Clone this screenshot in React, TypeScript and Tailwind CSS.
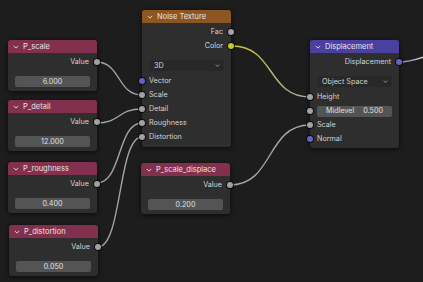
import React from "react";

type Kind = "float" | "vector" | "color";

const socketTone: Record<Kind, string> = {
  float: "bg-[#a1a1a1]",
  vector: "bg-[#6363c7]",
  color: "bg-[#c7c729]",
};

function Socket({ side, kind = "float" }: { side: "in" | "out"; kind?: Kind }) {
  return (
    <span
      className={`absolute top-1/2 -translate-y-1/2 w-[6px] h-[6px] rounded-full ring-1 ring-black/70 ${socketTone[kind]} ${
        side === "in" ? "left-[-3px]" : "right-[-3px]"
      }`}
    />
  );
}

function Chevron({ className }: { className?: string }) {
  return (
    <svg viewBox="0 0 8 5" className={className} fill="none" stroke="currentColor" strokeWidth="1.2">
      <path d="M1 1 L4 4 L7 1" />
    </svg>
  );
}

function Header({ title, tone }: { title: string; tone: string }) {
  return (
    <div className={`h-[13px] rounded-t-[3px] flex items-center pl-[5px] gap-[4px] text-[7.5px] text-[#e4e4e4] ${tone}`}>
      <Chevron className="w-[6px] h-[4px]" />
      <span className="leading-none">{title}</span>
    </div>
  );
}

function OutRow({ label, kind }: { label: string; kind?: Kind }) {
  return (
    <div className="relative h-[14px] flex items-center justify-end pr-[8px]">
      <span className="leading-none">{label}</span>
      <Socket side="out" kind={kind} />
    </div>
  );
}

function InRow({ label, kind }: { label: string; kind?: Kind }) {
  return (
    <div className="relative h-[14px] flex items-center pl-[7px]">
      <span className="leading-none">{label}</span>
      <Socket side="in" kind={kind} />
    </div>
  );
}

function Dropdown({ label }: { label: string }) {
  return (
    <div className="mx-[7px] h-[11px] rounded-[2px] bg-[#282828] flex items-center justify-between pl-[5px] pr-[4px]">
      <span className="leading-none">{label}</span>
      <Chevron className="w-[5px] h-[3px] text-[#bdbdbd]" />
    </div>
  );
}

const valueNodes = [
  { title: "P_scale", left: "left-[8px]", top: "top-[40px]", value: "6.000" },
  { title: "P_detail", left: "left-[8px]", top: "top-[100px]", value: "12.000" },
  { title: "P_roughness", left: "left-[8px]", top: "top-[162px]", value: "0.400" },
  { title: "P_distortion", left: "left-[9px]", top: "top-[225px]", value: "0.050" },
  { title: "P_scale_displace", left: "left-[141px]", top: "top-[163px]", value: "0.200" },
];

const node = "absolute w-[89px] rounded-[3px] bg-[#2e2e2e] shadow-[0_1px_5px_rgba(0,0,0,0.7)]";

// handle length follows the horizontal span, like the editor's default curving
function link(x1: number, y1: number, x2: number, y2: number) {
  const h = Math.max(Math.abs(x2 - x1) * 0.55, 12);
  return `M${x1},${y1} C${x1 + h},${y1} ${x2 - h},${y2} ${x2},${y2}`;
}

export default function App() {
  return (
    <div className="relative w-[423px] h-[282px] overflow-hidden bg-[#1d1d1d] font-['Inter',sans-serif] text-[7.2px] text-[#d4d4d4]">
      <svg className="absolute inset-0" width="423" height="282" fill="none">
        <defs>
          <linearGradient id="yl" x1="232" y1="46" x2="310" y2="97" gradientUnits="userSpaceOnUse">
            <stop offset="0" stopColor="#c9c92c" />
            <stop offset="1" stopColor="#a8a8a8" />
          </linearGradient>
          <linearGradient id="pl" x1="398" y1="62" x2="423" y2="55" gradientUnits="userSpaceOnUse">
            <stop offset="0" stopColor="#7b74d8" />
            <stop offset="1" stopColor="#d6d6d6" />
          </linearGradient>
        </defs>
        <g stroke="#a4a4a4" strokeWidth="1.4">
          <path d={link(96, 62, 142, 95)} />
          <path d={link(96, 123, 142, 109)} />
          <path d={link(97, 183, 142, 123)} />
          <path d={link(98, 247, 142, 137)} />
          <path d={link(230, 185, 310, 125)} />
        </g>
        <path d={link(232, 46, 310, 97)} stroke="url(#yl)" strokeWidth="1.4" />
        <path d="M398,62 C418,62 425,54 450,50" stroke="url(#pl)" strokeWidth="1.4" />
      </svg>

      {valueNodes.map((n) => (
        <div key={n.title} className={`${node} ${n.left} ${n.top}`}>
          <Header title={n.title} tone="bg-[#83304e]" />
          <div className="mt-[2px]">
            <OutRow label="Value" />
          </div>
          <div className="mx-[7px] mt-[7px] mb-[4px] h-[11px] rounded-[2px] bg-[#545454] flex items-center justify-center text-[#e0e0e0]">
            <span className="leading-none">{n.value}</span>
          </div>
        </div>
      ))}

      <div className={`${node} left-[142px] top-[10px]`}>
        <Header title="Noise Texture" tone="bg-[#8c5522]" />
        <div className="mt-[2px]">
          <OutRow label="Fac" />
          <OutRow label="Color" kind="color" />
        </div>
        <div className="mt-[7px]">
          <Dropdown label="3D" />
        </div>
        <div className="mt-[3px] mb-[3px]">
          <InRow label="Vector" kind="vector" />
          <InRow label="Scale" />
          <InRow label="Detail" />
          <InRow label="Roughness" />
          <InRow label="Distortion" />
        </div>
      </div>

      <div className={`${node} left-[310px] top-[40px]`}>
        <Header title="Displacement" tone="bg-[#4a40a0]" />
        <div className="mt-[2px]">
          <OutRow label="Displacement" kind="vector" />
        </div>
        <div className="mt-[7px]">
          <Dropdown label="Object Space" />
        </div>
        <div className="mt-[3px] mb-[2px]">
          <InRow label="Height" />
          <div className="relative h-[14px] flex items-center px-[7px]">
            <Socket side="in" />
            <div className="flex-1 h-[11px] rounded-[2px] bg-[#545454] flex items-center justify-between px-[9px] text-[#e0e0e0]">
              <span className="leading-none">Midlevel</span>
              <span className="leading-none">0.500</span>
            </div>
          </div>
          <InRow label="Scale" />
          <InRow label="Normal" kind="vector" />
        </div>
      </div>
    </div>
  );
}
